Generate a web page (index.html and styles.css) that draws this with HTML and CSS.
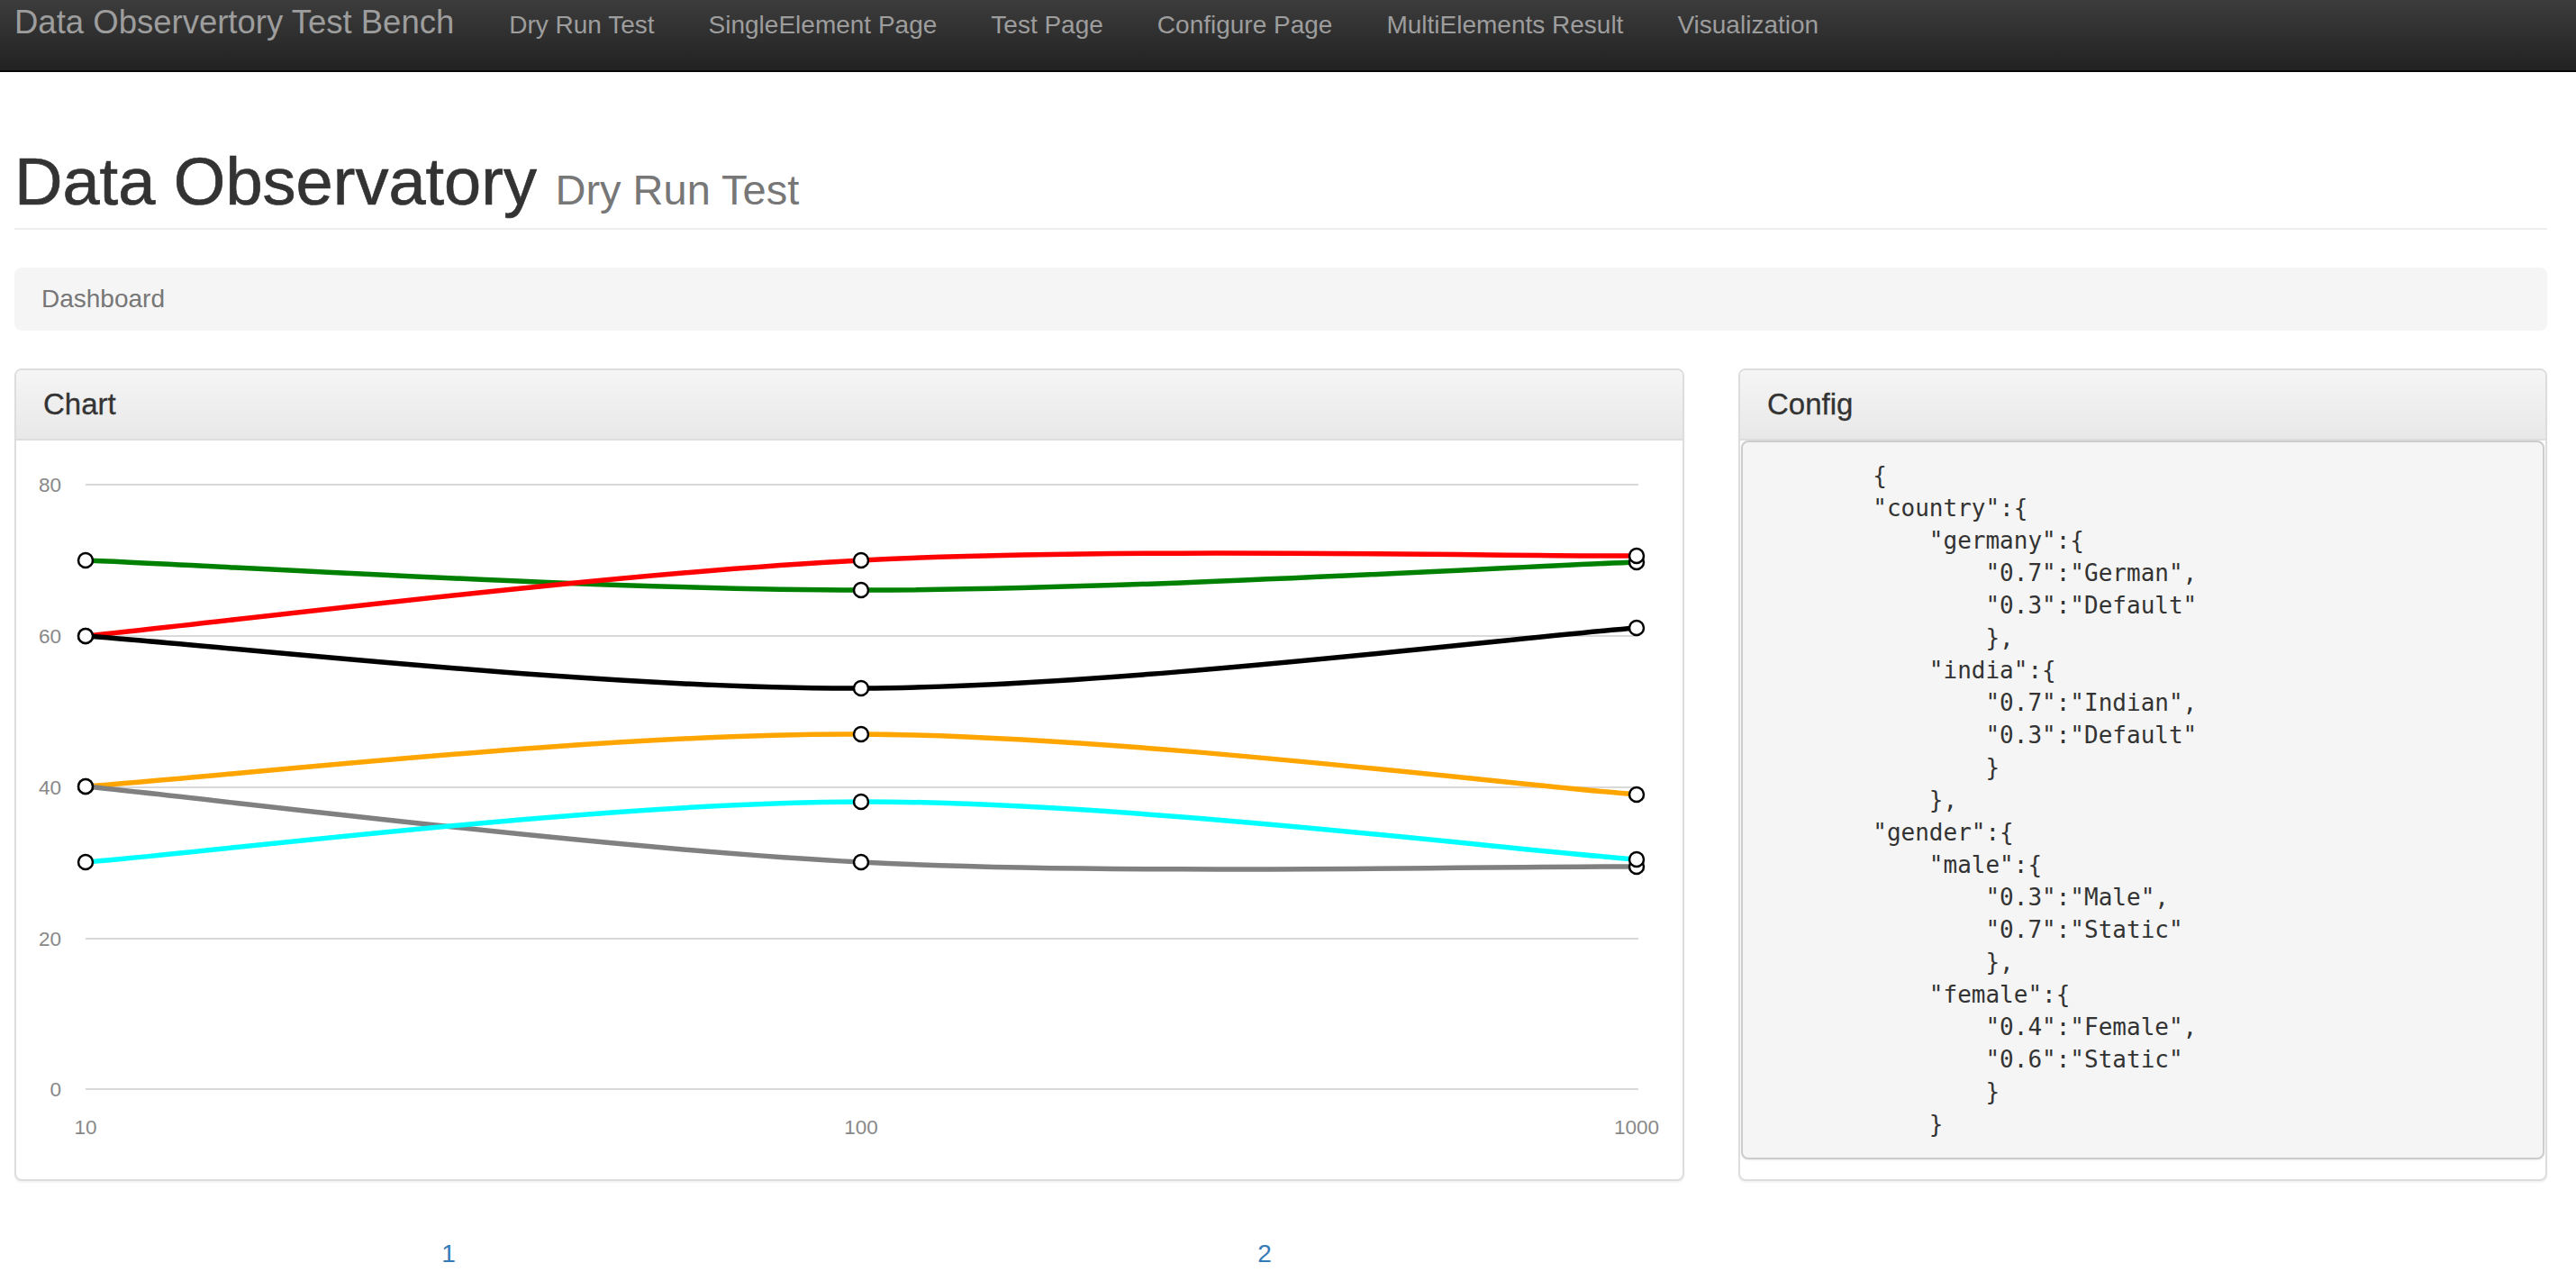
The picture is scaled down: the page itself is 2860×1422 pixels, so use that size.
FILE: index.html
```html
<!DOCTYPE html>
<html lang="en">
<head>
<meta charset="utf-8">
<title>Data Observatory - Dry Run Test</title>
<link rel="stylesheet" href="styles.css">
</head>
<body>
<nav class="navbar">
  <a class="brand" href="#">Data Observertory Test Bench</a>
  <ul class="nav">
    <li><a href="#">Dry Run Test</a></li>
    <li><a href="#">SingleElement Page</a></li>
    <li><a href="#">Test Page</a></li>
    <li><a href="#">Configure Page</a></li>
    <li><a href="#">MultiElements Result</a></li>
    <li><a href="#">Visualization</a></li>
  </ul>
</nav>
<main class="container">
  <div class="page-header">
    <h1>Data Observatory <small>Dry Run Test</small></h1>
  </div>
  <ol class="breadcrumb"><li>Dashboard</li></ol>
  <div class="row">
    <section class="panel">
      <div class="panel-heading"><h3 class="panel-title">Chart</h3></div>
      <div class="panel-body chart-body">
        <svg class="chart" width="1850" height="820" viewBox="0 0 1850 820">
          <g class="grid">
            <line x1="77" y1="49" x2="1801" y2="49"/>
            <line x1="77" y1="217" x2="1801" y2="217"/>
            <line x1="77" y1="385" x2="1801" y2="385"/>
            <line x1="77" y1="553" x2="1801" y2="553"/>
            <line x1="77" y1="720" x2="1801" y2="720"/>
          </g>
          <g class="ylabels">
            <text x="50" y="49">80</text>
            <text x="50" y="217">60</text>
            <text x="50" y="385">40</text>
            <text x="50" y="553">20</text>
            <text x="50" y="720">0</text>
          </g>
          <g class="xlabels">
            <text x="77" y="762">10</text>
            <text x="938" y="762">100</text>
            <text x="1799" y="762">1000</text>
          </g>
          <g class="series">
            <path class="s-green" d="M77,133 C220.5,138.5 651,165.7 938,166 C1225,166.3 1655.5,140.2 1799,135"/>
            <path class="s-red" d="M77,217 C220.5,203 651,147.8 938,133 C1225,118.2 1655.5,128.8 1799,128"/>
            <path class="s-black" d="M77,217 C220.5,226.7 651,276.5 938,275 C1225,273.5 1655.5,219.2 1799,208"/>
            <path class="s-orange" d="M77,384 C220.5,374.3 651,324.5 938,326 C1225,327.5 1655.5,381.8 1799,393"/>
            <path class="s-gray" d="M77,384 C220.5,398 651,453.2 938,468 C1225,482.8 1655.5,472.2 1799,473"/>
            <path class="s-cyan" d="M77,468 C220.5,456.8 651,401.5 938,401 C1225,400.5 1655.5,454.3 1799,465"/>
          </g>
          <g class="dots">
            <circle cx="77" cy="133" r="8"/><circle cx="938" cy="166" r="8"/><circle cx="1799" cy="135" r="8"/>
            <circle cx="77" cy="217" r="8"/><circle cx="938" cy="133" r="8"/><circle cx="1799" cy="128" r="8"/>
            <circle cx="77" cy="217" r="8"/><circle cx="938" cy="275" r="8"/><circle cx="1799" cy="208" r="8"/>
            <circle cx="77" cy="384" r="8"/><circle cx="938" cy="326" r="8"/><circle cx="1799" cy="393" r="8"/>
            <circle cx="77" cy="384" r="8"/><circle cx="938" cy="468" r="8"/><circle cx="1799" cy="473" r="8"/>
            <circle cx="77" cy="468" r="8"/><circle cx="938" cy="401" r="8"/><circle cx="1799" cy="465" r="8"/>
          </g>
        </svg>
      </div>
    </section>
    <section class="panel">
      <div class="panel-heading"><h3 class="panel-title">Config</h3></div>
      <div class="panel-body config-body">
<pre class="config">        {
        "country":{
            "germany":{
                "0.7":"German",
                "0.3":"Default"
                },
            "india":{
                "0.7":"Indian",
                "0.3":"Default"
                }
            },
        "gender":{
            "male":{
                "0.3":"Male",
                "0.7":"Static"
                },
            "female":{
                "0.4":"Female",
                "0.6":"Static"
                }
            }</pre>
      </div>
    </section>
  </div>
  <div class="pager">
    <a href="#">1</a>
    <a href="#">2</a>
  </div>
</main>
</body>
</html>
```
FILE: styles.css
```css
html, body {
  margin: 0;
  padding: 0;
}
body {
  font-family: "Liberation Sans", Arial, Helvetica, sans-serif;
  color: #333;
  background: #fff;
  overflow: hidden;
}
a { text-decoration: none; }

.navbar {
  display: flex;
  align-items: baseline;
  height: 73px;
  padding-top: 5px;
  background: linear-gradient(to bottom, #3c3c3c 0%, #222 100%);
  border-bottom: 2px solid #080808;
}
.brand {
  font-size: 36.5px;
  line-height: 40px;
  color: #9d9d9d;
  padding: 0 31px 0 16px;
}
.nav {
  display: flex;
  align-items: baseline;
  list-style: none;
  margin: 0;
  padding: 0;
}
.nav a {
  display: block;
  font-size: 28px;
  line-height: 40px;
  color: #9d9d9d;
  padding: 0 30px;
}

.container {
  padding: 0 32px 0 16px;
}
.page-header {
  margin: 82px 0 42px;
  padding-bottom: 11px;
  border-bottom: 2px solid #eee;
}
.page-header h1 {
  margin: 0;
  font-size: 74px;
  line-height: 80px;
  font-weight: normal;
  color: #333;
  -webkit-text-stroke: 0.7px #333;
}
.page-header small {
  font-size: 47px;
  line-height: 1;
  color: #777;
  -webkit-text-stroke: 0;
}

.breadcrumb {
  list-style: none;
  margin: 0 0 42px;
  padding: 0 30px;
  height: 70px;
  line-height: 70px;
  font-size: 28px;
  color: #777;
  background: #f5f5f5;
  border-radius: 8px;
}

.row {
  display: grid;
  grid-template-columns: 1854px 1fr;
  column-gap: 60px;
}
.panel {
  border: 2px solid #ddd;
  border-radius: 8px;
  background: #fff;
  box-shadow: 0 2px 2px rgba(0, 0, 0, 0.05);
  overflow: hidden;
}
.panel-heading {
  height: 76px;
  padding: 0 30px;
  display: flex;
  align-items: center;
  background: linear-gradient(to bottom, #f5f5f5 0%, #e8e8e8 100%);
  border-bottom: 2px solid #ddd;
}
.panel-title {
  margin: 0;
  font-size: 33px;
  font-weight: normal;
  color: #333;
  line-height: 36px;
  -webkit-text-stroke: 0.3px #333;
}
.chart-body {
  padding: 0;
}
.chart {
  display: block;
}
.grid line {
  stroke: #d9d9d9;
  stroke-width: 2;
}
.ylabels text {
  font-family: "Liberation Sans", Arial, sans-serif;
  font-size: 22.5px;
  fill: #888;
  text-anchor: end;
  dominant-baseline: central;
}
.xlabels text {
  font-family: "Liberation Sans", Arial, sans-serif;
  font-size: 22.5px;
  fill: #888;
  text-anchor: middle;
  dominant-baseline: central;
}
.series path {
  fill: none;
  stroke-width: 5.5;
}
.s-red { stroke: #ff0000; }
.s-green { stroke: #008000; }
.s-black { stroke: #000; }
.s-orange { stroke: #ffa500; }
.s-cyan { stroke: #00ffff; }
.s-gray { stroke: #808080; }
.dots circle {
  fill: #fff;
  stroke: #000;
  stroke-width: 2.5;
}

.config-body {
  padding: 0 1px 22px;
}
.config {
  margin: 0;
  padding: 19px;
  border: 2px solid #ccc;
  border-radius: 8px;
  background: #f5f5f5;
  font-family: "DejaVu Sans Mono", Menlo, monospace;
  font-size: 26px;
  line-height: 36px;
  color: #333;
  box-shadow: 0 1px 2px rgba(0, 0, 0, 0.08);
}

.pager {
  display: grid;
  grid-template-columns: 964px 848px;
  margin-top: 61px;
  line-height: 40px;
  font-size: 28px;
  text-align: center;
}
.pager a {
  color: #337ab7;
}
```
